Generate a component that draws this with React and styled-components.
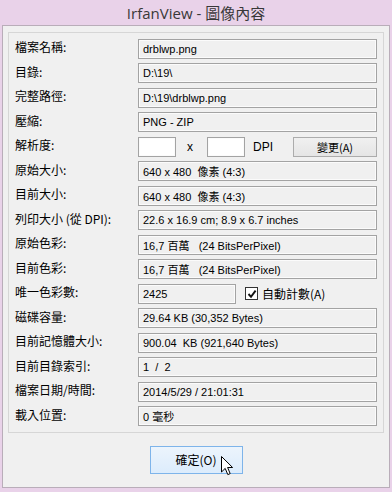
import React from 'react';
import styled, { createGlobalStyle } from 'styled-components';

const GlobalStyle = createGlobalStyle`
    html, body {
        margin: 0;
        padding: 0;
        background: #e9d2e9;
    }
    * {
        box-sizing: border-box;
    }
`;

const Window = styled.div`
    width: 392px;
    height: 492px;
    display: flex;
    flex-direction: column;
    background: #e9d2e9;
    font-family: "Liberation Sans", "Noto Sans CJK TC", sans-serif;
`;

const TitleBar = styled.div`
    height: 25px;
    display: flex;
    align-items: center;
    justify-content: center;
    font-family: "Open Sans", "Noto Sans CJK TC", sans-serif;
    font-size: 15px;
    color: #383838;
    padding-bottom: 1px;
`;

const Client = styled.div`
    flex: 1;
    margin: 0 2px 4px 2px;
    border: 1px solid #b9adb9;
    background: #f0f0f0;
    padding: 6px 5px 0 5px;
    display: flex;
    flex-direction: column;
    position: relative;
`;

const Group = styled.div`
    border: 1px solid #d6d6d6;
    padding: 5.5px 6px 6px 6px;
    display: grid;
    grid-template-columns: 123px 1fr;
    grid-auto-rows: 20px;
    row-gap: 4.5px;
    align-items: center;
`;

const Label = styled.div`
    font-family: "Noto Sans CJK TC", "Liberation Sans", sans-serif;
    font-size: 12px;
    color: #000;
    white-space: nowrap;
    line-height: 20px;
    margin-top: -3px;
`;

const Field = styled.div`
    height: 20px;
    width: ${({ $w }) => ($w ? `${$w}px` : '100%')};
    border: 1px solid #a3a3a3;
    box-shadow: inset 0 0 0 1px #fbfbfb;
    background: ${({ $white }) => ($white ? '#fff' : '#f0f0f0')};
    font-size: 11px;
    color: #000;
    padding: 0 4px;
    display: flex;
    align-items: center;
    white-space: pre;
    font-family: "Liberation Sans", "Noto Sans CJK TC", sans-serif;
`;

const Inline = styled.div`
    display: flex;
    align-items: center;
    height: 20px;
`;

const Small = styled.span`
    font-size: 12px;
    color: #000;
    margin: ${({ $m }) => $m || '0'};
`;

const SmallButton = styled.button`
    margin-left: auto;
    width: 84px;
    height: 20px;
    border: 1px solid #acacac;
    background: linear-gradient(#f0f0f0, #e5e5e5);
    font-family: "Noto Sans CJK TC", "Liberation Sans", sans-serif;
    font-size: 11px;
    color: #000;
    padding: 0;
    display: flex;
    align-items: center;
    justify-content: center;
`;

const CheckBox = styled.span`
    width: 13px;
    height: 13px;
    border: 1px solid #333;
    background: #fff;
    margin: 0 4px 0 9px;
    display: inline-flex;
    align-items: center;
    justify-content: center;
`;

const CheckLabel = styled.span`
    font-family: "Noto Sans CJK TC", "Liberation Sans", sans-serif;
    font-size: 12px;
    color: #000;
`;

const Footer = styled.div`
    flex: 1;
    display: flex;
    align-items: center;
    justify-content: center;
    padding-bottom: 1px;
`;

const OkButton = styled.button`
    width: 93px;
    height: 28px;
    border: 1px solid #7eb4ea;
    background: linear-gradient(#ecf4fc, #dcecfc);
    font-family: "Noto Sans CJK TC", "Liberation Sans", sans-serif;
    font-size: 12px;
    color: #000;
    padding: 0;
    position: relative;
    display: flex;
    align-items: center;
    justify-content: center;
`;

const Cursor = styled.svg`
    position: absolute;
    left: 70px;
    top: 9px;
`;

const rows = [
    ['檔案名稱:', 'drblwp.png'],
    ['目錄:', 'D:\\19\\'],
    ['完整路徑:', 'D:\\19\\drblwp.png'],
    ['壓縮:', 'PNG - ZIP'],
    ['解析度:', 'dpi'],
    ['原始大小:', '640 x 480  像素 (4:3)'],
    ['目前大小:', '640 x 480  像素 (4:3)'],
    ['列印大小 (從 DPI):', '22.6 x 16.9 cm; 8.9 x 6.7 inches'],
    ['原始色彩:', '16,7 百萬   (24 BitsPerPixel)'],
    ['目前色彩:', '16,7 百萬   (24 BitsPerPixel)'],
    ['唯一色彩數:', 'unique'],
    ['磁碟容量:', '29.64 KB (30,352 Bytes)'],
    ['目前記憶體大小:', '900.04  KB (921,640 Bytes)'],
    ['目前目錄索引:', '1  /  2'],
    ['檔案日期/時間:', '2014/5/29 / 21:01:31'],
    ['載入位置:', '0 毫秒'],
];

const renderValue = (value) => {
    if (value === 'dpi') {
        return (
            <Inline>
                <Field $w={38} $white />
                <Small $m="0 14px 0 11px">x</Small>
                <Field $w={38} $white />
                <Small $m="0 0 0 8px">DPI</Small>
                <SmallButton>變更(A)</SmallButton>
            </Inline>
        );
    }
    if (value === 'unique') {
        return (
            <Inline>
                <Field $w={98}>2425</Field>
                <CheckBox>
                    <svg width="10" height="10" viewBox="0 0 10 10">
                        <path d="M1.5 5 L4 7.8 L8.6 1.6" fill="none" stroke="#111" strokeWidth="1.9" />
                    </svg>
                </CheckBox>
                <CheckLabel>自動計數(A)</CheckLabel>
            </Inline>
        );
    }
    return <Field>{value}</Field>;
};

const App = () => {
    return (
        <>
            <GlobalStyle />
            <Window>
                <TitleBar>IrfanView - 圖像內容</TitleBar>
                <Client>
                    <Group>
                        {rows.map(([label, value]) => (
                            <React.Fragment key={label}>
                                <Label>{label}</Label>
                                {renderValue(value)}
                            </React.Fragment>
                        ))}
                    </Group>
                    <Footer>
                        <OkButton>
                            確定(O)
                            <Cursor width="13" height="20" viewBox="0 0 13 20">
                                <path
                                    d="M0.5 0.5 L0.5 16 L4.2 12.4 L6.8 18.6 L9.2 17.6 L6.6 11.5 L11.6 11.5 Z"
                                    fill="#fff"
                                    stroke="#000"
                                    strokeWidth="1"
                                    strokeLinejoin="miter"
                                />
                            </Cursor>
                        </OkButton>
                    </Footer>
                </Client>
            </Window>
        </>
    );
};

export default App;
